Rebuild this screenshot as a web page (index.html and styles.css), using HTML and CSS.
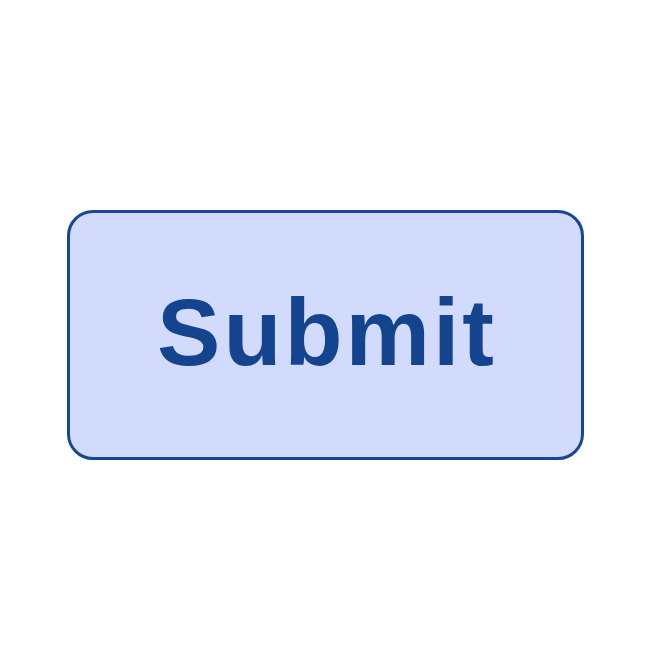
FILE: index.html
```html
<!DOCTYPE html>
<html lang="en">
<head>
<meta charset="utf-8">
<title>Submit</title>
<link rel="stylesheet" href="styles.css">
</head>
<body>
<main class="stage">
  <button class="submit-btn" type="submit">Submit</button>
</main>
</body>
</html>
```
FILE: styles.css
```css
html, body {
  margin: 0;
  padding: 0;
  background: #ffffff;
}

.stage {
  width: 670px;
  height: 670px;
  display: flex;
  align-items: flex-start;
  justify-content: flex-start;
  padding: 210px 0 0 67px;
  box-sizing: border-box;
}

.submit-btn {
  width: 517px;
  height: 250px;
  box-sizing: border-box;
  border: 3px solid #1a4597;
  border-radius: 26px;
  background: #d3dbfd;
  color: #15448e;
  font-family: "Liberation Sans", Arial, sans-serif;
  font-weight: 700;
  font-size: 95px;
  letter-spacing: 3px;
  display: flex;
  align-items: center;
  justify-content: center;
  padding: 0 0 6px 3px;
  cursor: pointer;
}
```
